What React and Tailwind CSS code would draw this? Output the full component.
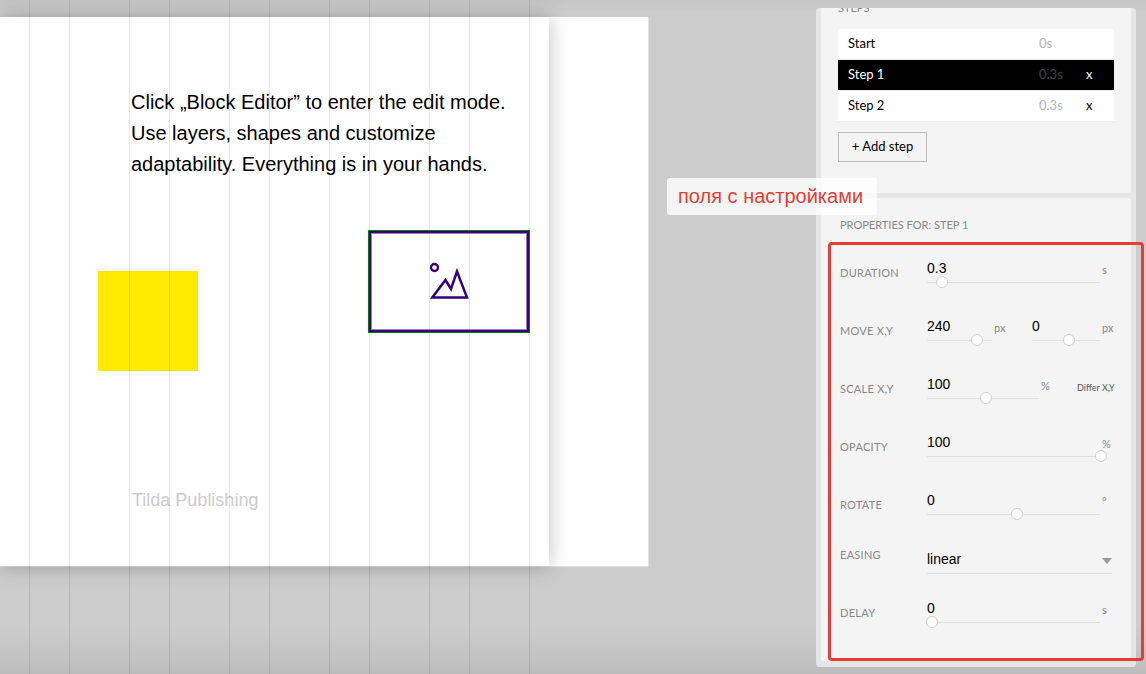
import React, { useState } from 'react';

const guides = [29, 69, 129, 169, 229, 269, 329, 369, 429, 469, 529];

const initialSteps = [
  { name: 'Start', time: '0s' },
  { name: 'Step 1', time: '0.3s' },
  { name: 'Step 2', time: '0.3s' }
];

function Field({ id, label, value, onChange, min, max, step = 1, unit, width, unitWidth = '' }) {
  return (
    <div className="flex">
      <div className={width}>
        <input
          id={id}
          type="text"
          value={value}
          onChange={(e) => onChange(e.target.value)}
          className="block w-full h-[29px] border-b border-[#e0e0e0] bg-transparent font-['Liberation_Sans',sans-serif] text-sm text-black focus:outline-none"
        />
        <div className="-mt-[7px] -ml-px -mr-[7px]">
          <input
            type="range"
            aria-label={label}
            min={min}
            max={max}
            step={step}
            value={Number(value) || 0}
            onChange={(e) => onChange(e.target.value)}
            className="relative block w-full h-3 appearance-none bg-transparent [&::-webkit-slider-thumb]:appearance-none [&::-webkit-slider-thumb]:size-3 [&::-webkit-slider-thumb]:rounded-full [&::-webkit-slider-thumb]:border [&::-webkit-slider-thumb]:border-[#cfcfcf] [&::-webkit-slider-thumb]:bg-white"
          />
        </div>
      </div>
      <span className={`pl-0.5 pt-2 text-[11px] leading-4 text-[#8a8a8a] ${unitWidth}`}>{unit}</span>
    </div>
  );
}

function Row({ id, label, children }) {
  return (
    <div className="flex h-[58px]">
      <label htmlFor={id} className="w-[87px] shrink-0 pt-[11px] text-[11px] leading-4 tracking-wide text-[#888]">
        {label}
      </label>
      {children}
    </div>
  );
}

function Canvas() {
  return (
    <main className="relative flex-1 min-w-0 pt-[17px] font-['Liberation_Sans',sans-serif]">
      <div className="mr-[167px] h-[550px] border-r border-b border-[#e0e0e0] bg-white">
        <div className="relative h-[549px] mr-[99px] bg-white shadow-[0_0_20px_rgba(0,0,0,0.25)]">
          <div className="absolute left-[98px] top-[254px] size-[100px] bg-[#ffea00]" />
          <p className="absolute left-[131px] top-[70px] w-[390px] text-xl leading-[31px] text-black">
            Click „Block Editor” to enter the edit mode. Use layers, shapes and customize adaptability. Everything is in your hands.
          </p>
          <p className="absolute left-[132px] top-[469px] text-lg text-[#ccc]">Tilda Publishing</p>
        </div>
      </div>

      {guides.map((x) => (
        <div key={x} className="absolute inset-y-0 w-px bg-[#000082]/10" style={{ left: x }} />
      ))}

      {/* selected shape */}
      <div className="absolute left-[368px] top-[230px] w-[162px] h-[103px] border border-[#008000]">
        <div className="h-full border-2 border-[#35007a]">
          <div className="h-full border border-[#35007a]/50">
            <svg viewBox="0 0 154 95" className="block size-full" fill="none" stroke="#35007a">
              <circle cx="62.5" cy="33.5" r="3.5" strokeWidth="2.3" />
              <path d="M60.3 63.5 L73.5 46 L79 55 L85 37.5 L95 63.5 Z" strokeWidth="2.5" />
            </svg>
          </div>
        </div>
      </div>
    </main>
  );
}

function App() {
  const [steps, setSteps] = useState(initialSteps);
  const [active, setActive] = useState(1);
  const [props, setProps] = useState({
    duration: '0.3',
    moveX: '240',
    moveY: '0',
    scale: '100',
    opacity: '100',
    rotate: '0',
    easing: 'linear',
    delay: '0'
  });

  const set = (name) => (value) => setProps((prev) => ({ ...prev, [name]: value }));

  const addStep = () => {
    setSteps([...steps, { name: `Step ${steps.length}`, time: '0.3s' }]);
  };

  const removeStep = (index) => {
    setSteps(steps.filter((_, i) => i !== index));
    setActive(0);
  };

  return (
    <div className="relative flex min-h-screen overflow-hidden bg-[#ccc] font-[Lato,sans-serif]">
      <Canvas />

      <div className="pointer-events-none absolute inset-x-0 top-0 h-3 bg-linear-to-b from-black/4 to-transparent" />
      <div className="pointer-events-none absolute inset-x-0 bottom-0 h-12 border-b border-black/10 bg-linear-to-t from-black/7 to-transparent" />

      <aside className="relative w-80 shrink-0 mt-2 mb-[7px] mr-[10px] px-[5px] pb-[5px] rounded-[4px] bg-[#e6e6e6]">
        <section className="h-[185px] overflow-hidden rounded-b-[3px] bg-[#f4f4f4] px-[17px]">
          <h2 className="-mt-2 mb-[13px] text-[11px] leading-4 text-[#888]">STEPS</h2>
          <ul className="text-[13px]">
            {steps.map((step, i) => (
              <li
                key={i}
                className={`flex h-[31px] border-b border-[#ececec] ${i === active ? 'bg-black text-white' : 'bg-white text-black'}`}
              >
                <button type="button" onClick={() => setActive(i)} className="flex flex-1 items-center pl-[10px] text-left">
                  <span className="flex-1">{step.name}</span>
                  <span className={`w-[50px] ${i === active ? 'text-[#444]' : 'text-[#b5b5b5]'}`}>{step.time}</span>
                </button>
                <div className="w-[25px]">
                  {i > 0 && (
                    <button type="button" onClick={() => removeStep(i)} className="-ml-[3px] h-full px-0">
                      x
                    </button>
                  )}
                </div>
              </li>
            ))}
          </ul>
          <button
            type="button"
            onClick={addStep}
            className="mt-[10px] h-[30px] w-[89px] border border-[#bebebe] text-[13px] text-black"
          >
            + Add step
          </button>
        </section>

        <section className="mt-[5px] rounded-[3px] bg-[#f4f4f4] pt-[19px] pb-[9px] pl-[19px]">
          <h2 className="mb-[21px] text-[11px] leading-4 text-[#888]">PROPERTIES FOR: STEP {active}</h2>

          <Row id="duration" label="DURATION">
            <Field id="duration" label="Duration" value={props.duration} onChange={set('duration')} min={0} max={5} step={0.1} unit="s" width="w-[173px]" />
          </Row>
          <Row id="moveX" label="MOVE X,Y">
            <Field id="moveX" label="Move X" value={props.moveX} onChange={set('moveX')} min={-500} max={500} unit="px" width="w-[65px]" unitWidth="w-10" />
            <Field id="moveY" label="Move Y" value={props.moveY} onChange={set('moveY')} min={-500} max={500} unit="px" width="w-[68px]" />
          </Row>
          <Row id="scale" label="SCALE X,Y">
            <Field id="scale" label="Scale" value={props.scale} onChange={set('scale')} min={0} max={200} unit="%" width="w-[112px]" unitWidth="w-[38px]" />
            <button type="button" className="self-start mt-[10px] text-[9px] leading-4 text-[#555]">
              Differ X,Y
            </button>
          </Row>
          <Row id="opacity" label="OPACITY">
            <Field id="opacity" label="Opacity" value={props.opacity} onChange={set('opacity')} min={0} max={100} unit="%" width="w-[173px]" />
          </Row>
          <Row id="rotate" label="ROTATE">
            <Field id="rotate" label="Rotate" value={props.rotate} onChange={set('rotate')} min={-180} max={180} unit="°" width="w-[173px]" />
          </Row>

          <div className="flex h-[50px]">
            <label htmlFor="easing" className="w-[87px] pt-[3px] text-[11px] leading-4 tracking-wide text-[#888]">
              EASING
            </label>
            <div className="relative w-[185px]">
              <select
                id="easing"
                value={props.easing}
                onChange={(e) => set('easing')(e.target.value)}
                className="block h-[30px] w-full appearance-none border-b border-[#e0e0e0] bg-transparent font-['Liberation_Sans',sans-serif] text-sm text-black focus:outline-none"
              >
                <option value="linear">linear</option>
                <option value="ease-in">ease-in</option>
                <option value="ease-out">ease-out</option>
              </select>
              <svg viewBox="0 0 10 6" className="pointer-events-none absolute right-0 top-[14px] h-[6px] w-[10px]" fill="#999">
                <path d="M0 0h10L5 6z" />
              </svg>
            </div>
          </div>

          <Row id="delay" label="DELAY">
            <Field id="delay" label="Delay" value={props.delay} onChange={set('delay')} min={0} max={5} step={0.1} unit="s" width="w-[173px]" />
          </Row>
        </section>

        {/* callout with its caption */}
        <div className="pointer-events-none absolute left-[12px] -right-2 top-[234px] bottom-[6px] rounded-[4px] border-[3px] border-[#e63c32]" />
        <div className="absolute -left-[149px] top-[170px] flex h-[37px] w-[210px] items-center rounded-[3px] bg-white/80 pb-0.5 pl-[11px] font-['Liberation_Sans',sans-serif] text-xl whitespace-nowrap text-[#e63c32]">
          поля с настройками
        </div>
      </aside>
    </div>
  );
}

export default App;
